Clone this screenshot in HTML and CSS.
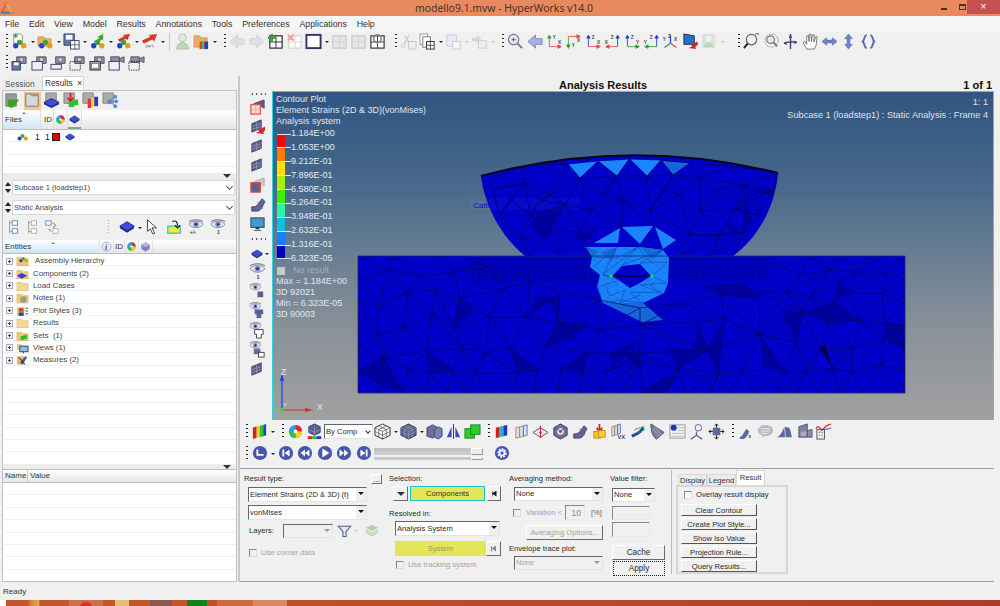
FILE: index.html
```html
<!DOCTYPE html>
<html lang="en">
<head>
<meta charset="utf-8">
<title>modello9.1.mvw - HyperWorks v14.0</title>
<link rel="stylesheet" href="styles.css">
</head>
<body>
<svg class="defs" aria-hidden="true">
  <defs>
    <g id="cl"><circle cx="5" cy="13.5" r="2.8" fill="#2b3fc4"/><circle cx="9" cy="10" r="2.8" fill="#3aa535"/><circle cx="13.5" cy="13.5" r="2.8" fill="#e09a20"/></g>
    <g id="pg"><rect x="8" y="8" width="9" height="9" fill="#fff" stroke="#3c4660"/><path d="M12.5 8v9M8 12.5h9" stroke="#3c4660" stroke-width=".8"/></g>
    <symbol id="clu" viewBox="0 6 18 11"><use href="#cl"/></symbol>
    <symbol id="new" viewBox="0 0 18 18"><path d="M3 1h7l2 2v9H3z" fill="#fff" stroke="#8b8b8b"/><path d="M3 3h4M5 1v4" stroke="#35a030" stroke-width="1.600"/><use href="#cl"/></symbol>
    <symbol id="open" viewBox="0 0 18 18"><path d="M1 4h6l2 2h6v8H1z" fill="#e9ad5f" stroke="#c58a3a" stroke-width=".6"/><use href="#cl"/></symbol>
    <symbol id="save" viewBox="0 0 18 18"><path d="M1 1h11v12H1z" fill="#6476a8" stroke="#3c4660"/><rect x="3" y="2" width="7" height="5" fill="#fff"/><use href="#pg"/></symbol>
    <symbol id="imp" viewBox="0 0 18 18"><path d="M15 1 9 4 11 5.500 5 9l2 1.500L3 12l6 .5-1-2 6-3.500 1 1.500z" fill="#40a828"/><use href="#cl"/></symbol>
    <symbol id="exp" viewBox="0 0 18 18"><path d="M16 1 8 2l2 1.500L3 7l2 2.500 6.500-3.500L13 8z" fill="#d8362a"/><use href="#cl"/></symbol>
    <symbol id="ppt" viewBox="0 0 18 18"><path d="M17 1 8 2l2 2L1 8l2 3 9-4 2 2z" fill="#d8362a"/><text x="5" y="16" class="svt">PPT</text></symbol>
    <symbol id="person" viewBox="0 0 18 18"><circle cx="9" cy="5" r="4" fill="#e3e8dc" stroke="#b7bfae"/><path d="M3 17c0-5 3-7 6-7s6 2 6 7z" fill="#bcd8b4" stroke="#a8c0a0"/></symbol>
    <symbol id="fplot" viewBox="0 0 18 18"><path d="M1 3h6l2 2h6v10H1z" fill="#e9ad5f" stroke="#c58a3a" stroke-width=".6"/><path d="M7 9h2.500v8H7z" fill="#e33"/><path d="M9.500 9H12v8H9.500z" fill="#3c3"/><path d="M12 9h4v8h-4z" fill="#33c"/></symbol>
    <symbol id="al" viewBox="0 0 18 18"><path d="M1 9l8-7v4h7v6H9v4z" fill="#dfe0e3" stroke="#d2d2d6"/></symbol>
    <symbol id="ar" viewBox="0 0 18 18"><path d="M17 9 9 2v4H2v6h7v4z" fill="#dfe0e3" stroke="#d2d2d6"/></symbol>
    <symbol id="addp" viewBox="0 0 18 18"><rect x="3" y="3" width="13" height="13" fill="#fff" stroke="#2c3040" stroke-width="1.300"/><path d="M9.500 3v13M3 9.500h13" stroke="#2c3040"/><path d="M5 1v8M1 5h8" stroke="#38a030" stroke-width="2.600"/></symbol>
    <symbol id="delp" viewBox="0 0 18 18"><rect x="3" y="3" width="13" height="13" fill="#fff" stroke="#d8d8d8" stroke-width="1.300"/><path d="M9.500 3v13M3 9.500h13" stroke="#d8d8d8"/><path d="M2 2l6 6M8 2 2 8" stroke="#eaa8a0" stroke-width="2.400"/></symbol>
    <symbol id="frame" viewBox="0 0 18 18"><rect x="1.500" y="2" width="15" height="14" fill="#fff" stroke="#2d3468" stroke-width="2"/></symbol>
    <symbol id="gp" viewBox="0 0 18 18"><rect x="2" y="3" width="14" height="13" fill="#e6e6e8" stroke="#c7c7ca" stroke-width="1.300"/><path d="M9 3v13M2 9.500h14" stroke="#d2d2d4"/></symbol>
    <symbol id="refr" viewBox="0 0 18 18"><rect x="2" y="3" width="14" height="13" fill="#fff" stroke="#3a3e50" stroke-width="1.300"/><path d="M9 3v13M2 9.500h14" stroke="#3a3e50"/><circle cx="9" cy="6" r="4" fill="none" stroke="#888" stroke-width="1.800"/></symbol>
    <symbol id="cut" viewBox="0 0 18 18"><circle cx="3.500" cy="14" r="2" fill="none" stroke="#cfcfd2"/><path d="M4 12 10 2M11 12 5 3" stroke="#cfcfd2" stroke-width="1.400"/><rect x="9" y="9" width="8" height="8" fill="#eee" stroke="#c8c8ca"/></symbol>
    <symbol id="copy" viewBox="0 0 18 18"><rect x="1" y="1" width="8" height="11" fill="#fff" stroke="#9a9aa0"/><rect x="4" y="4" width="8" height="11" fill="#fff" stroke="#777"/><rect x="8" y="9" width="8" height="8" fill="#fff" stroke="#2c3040"/><path d="M12 9v8M8 13h8" stroke="#2c3040" stroke-width=".8"/></symbol>
    <symbol id="pst" viewBox="0 0 18 18"><rect x="2" y="2" width="10" height="12" fill="#e8ebf2" stroke="#ccd"/><rect x="8" y="9" width="8" height="8" fill="#f6f6f6" stroke="#ccc"/></symbol>
    <symbol id="pst2" viewBox="0 0 18 18"><path d="M1 5h5V2l5 5-5 5V9H1z" fill="#d6d6da"/><rect x="8" y="8" width="8" height="8" fill="#f0f0f0" stroke="#ccc"/></symbol>
    <symbol id="mag" viewBox="0 0 18 18"><circle cx="7" cy="7" r="5.500" fill="#e6e6f6" stroke="#7a7a90" stroke-width="1.300"/><path d="M11 11l5 5" stroke="#7a7a90" stroke-width="2.200"/><path d="M5 7h4M7 5v4" stroke="#555a80"/></symbol>
    <symbol id="back" viewBox="0 0 18 18"><path d="M1 9l8-7v4h7v6H9v4z" fill="#a8aee0" stroke="#8088c8"/></symbol>
    <symbol id="a1" viewBox="0 0 20 18"><path d="M4 15V3M4 1.500 2 5h4z" stroke="#30a030" fill="#30a030"/><path d="M4 15h12M18 15l-4-2v4z" stroke="#e04848" fill="#e04848"/><text x="8" y="6" class="sva">Y</text><text x="14" y="12" class="sva">X</text></symbol>
    <symbol id="a2" viewBox="0 0 20 18"><path d="M4 3v12M4 17 2 13h4z" stroke="#30a030" fill="#30a030"/><path d="M4 3h12M18 3l-4-2v4z" stroke="#e04848" fill="#e04848"/><text x="8" y="16" class="sva">Y</text><text x="14" y="10" class="sva">X</text></symbol>
    <symbol id="a3" viewBox="0 0 20 18"><path d="M4 15V3M4 1.500 2 5h4z" stroke="#2040d0" fill="#2040d0"/><path d="M4 15h12M18 15l-4-2v4z" stroke="#e04848" fill="#e04848"/><text x="8" y="6" class="sva">Z</text><text x="14" y="12" class="sva">X</text></symbol>
    <symbol id="a4" viewBox="0 0 20 18"><path d="M16 15V3M16 1.500 14 5h4z" stroke="#2040d0" fill="#2040d0"/><path d="M16 15H4M2 15l4-2v4z" stroke="#e04848" fill="#e04848"/><text x="8" y="6" class="sva">Z</text><text x="1" y="12" class="sva">X</text></symbol>
    <symbol id="a5" viewBox="0 0 20 18"><path d="M4 15V3M4 1.500 2 5h4z" stroke="#2040d0" fill="#2040d0"/><path d="M4 15h12M18 15l-4-2v4z" stroke="#30a030" fill="#30a030"/><text x="8" y="6" class="sva">Z</text><text x="14" y="12" class="sva">Y</text></symbol>
    <symbol id="a6" viewBox="0 0 20 18"><path d="M16 15V3M16 1.500 14 5h4z" stroke="#2040d0" fill="#2040d0"/><path d="M16 15H4M2 15l4-2v4z" stroke="#30a030" fill="#30a030"/><text x="8" y="6" class="sva">Z</text><text x="1" y="12" class="sva">Y</text></symbol>
    <symbol id="a7" viewBox="0 0 20 18"><path d="M10 11V2" stroke="#2040d0" stroke-width="1.500"/><path d="M10 11 3 16" stroke="#30a030" stroke-width="1.500"/><path d="M10 11l7 5" stroke="#e04848" stroke-width="1.500"/><text x="1" y="8" class="sva">Y</text><text x="7" y="5" class="sva">Z</text><text x="14" y="8" class="sva">X</text></symbol>
    <symbol id="scr" viewBox="0 0 18 18"><path d="M2 1l11 2v9L2 12z" fill="#2a6fc0" stroke="#222a50"/><path d="M16 9l-6 4 1 1-4 2 8 1-1-2 3-3z" fill="#dd2222"/></symbol>
    <symbol id="pers2" viewBox="0 0 18 18"><rect x="1" y="1" width="14" height="15" fill="#d8e4d8"/><circle cx="8" cy="6" r="3" fill="#f2f2f2"/><path d="M3 15c0-4 2-5 5-5s5 1 5 5z" fill="#b8d8b8"/></symbol>
    <symbol id="z1" viewBox="0 0 18 18"><circle cx="9" cy="7" r="5.500" fill="#eef" stroke="#666" stroke-width="1.300"/><path d="M5 11 1 16" stroke="#222" stroke-width="2"/><path d="M13 1h4" stroke="#444"/></symbol>
    <symbol id="z2" viewBox="0 0 18 18"><circle cx="9" cy="8" r="7" fill="none" stroke="#888" stroke-dasharray="1.500 1"/><circle cx="8" cy="7" r="4" fill="#e6e6f6" stroke="#777" stroke-width="1.200"/><path d="M11 10l4 4" stroke="#777" stroke-width="2"/></symbol>
    <symbol id="rot" viewBox="0 0 18 18"><path d="M9 1v16M2 11c3-2 10-2 14-1" fill="none" stroke="#3a4670" stroke-width="1.500"/><path d="M9 1 7 5h4zM2 11l3-2 0 4zM16 10l-3-2v4z" fill="#3a4670"/></symbol>
    <symbol id="hand" viewBox="0 0 18 18"><path d="M5 17 1 10l2-1 2 3V3l2 0 .5 6V1.500h2L10 9l1-7h2l-.5 7.500L14.500 4h1.500L15 13l-2 4z" fill="#fff" stroke="#555" stroke-width=".8"/></symbol>
    <symbol id="lr" viewBox="0 0 18 18"><path d="M1 9l5-4v2.500h6V5l5 4-5 4v-2.500H6V13z" fill="#7480c8" stroke="#4c58a8" stroke-width=".5"/></symbol>
    <symbol id="ud" viewBox="0 0 18 18"><path d="M9 1 5 6h2.500v6H5l4 5 4-5h-2.500V6H13z" fill="#7480c8" stroke="#4c58a8" stroke-width=".5"/></symbol>
    <symbol id="fit" viewBox="0 0 18 18"><path d="M7 2C4 3 5 7 3 9c2 2 1 6 4 7M11 2c3 1 2 5 4 7-2 2-1 6-4 7" fill="none" stroke="#5864b8" stroke-width="2"/></symbol>
    <g id="camb"><path d="M6 3h10v7H6z" fill="#8a8ea8" stroke="#555"/><circle cx="11" cy="6" r="2.400" fill="#c8cce0" stroke="#555" stroke-width=".7"/></g>
    <symbol id="c1" viewBox="0 0 18 18"><use href="#camb"/><rect x="1" y="8" width="9" height="9" fill="#6476a8" stroke="#3c4660"/><rect x="3" y="9" width="5" height="3" fill="#fff"/></symbol>
    <symbol id="c2" viewBox="0 0 18 18"><use href="#camb"/><rect x="1" y="8" width="11" height="9" fill="#eef" stroke="#3c4660"/></symbol>
    <symbol id="c3" viewBox="0 0 18 18"><use href="#camb"/><rect x="1" y="11" width="11" height="5" fill="#eee" stroke="#3c4660"/></symbol>
    <symbol id="c4" viewBox="0 0 18 18"><use href="#camb"/><rect x="1" y="8" width="11" height="9" fill="none" stroke="#333" stroke-dasharray="1.500 1"/></symbol>
    <symbol id="c5" viewBox="0 0 18 18"><use href="#camb"/><rect x="1" y="8" width="11" height="9" fill="#aab" stroke="#333"/><rect x="3" y="10" width="7" height="5" fill="#fff" stroke="#333" stroke-width=".5"/></symbol>
    <symbol id="c6" viewBox="0 0 18 18"><path d="M3 3h9v6H3z" fill="#8a8ea8" stroke="#555"/><path d="M12 5l5-2v6l-5-2z" fill="#8a8ea8" stroke="#555"/><rect x="1" y="8" width="11" height="9" fill="#eef" stroke="#3c4660"/></symbol>
    <symbol id="c7" viewBox="0 0 18 18"><path d="M3 3h9v6H3z" fill="#8a8ea8" stroke="#555"/><path d="M12 5l5-2v6l-5-2z" fill="#8a8ea8" stroke="#555"/><rect x="1" y="8" width="11" height="9" fill="none" stroke="#333" stroke-dasharray="1.500 1"/></symbol>
    <symbol id="f1" viewBox="0 0 18 18"><path d="M2 2h11v13H2z" fill="#9a9aa2" stroke="#777"/><path d="M16 8 4 8l0 7 4 2 3-2z" fill="#3fa028"/></symbol>
    <symbol id="f2" viewBox="0 0 18 18"><path d="M2 2h13v13H2z" fill="#aaa" stroke="#888"/><path d="M2 2h5l1 2h7v11H2z" fill="#d8d8d8" stroke="#888"/></symbol>
    <symbol id="f3" viewBox="0 0 18 18"><path d="M3 1h11v9H3z" fill="#aaa" stroke="#888"/><path d="M9 7 1 11l8 5 8-5z" fill="#3b4fd8" stroke="#1e2c90"/><path d="M1 11v2l8 4 8-4v-2l-8 4z" fill="#1e2c90"/></symbol>
    <symbol id="f4" viewBox="0 0 18 18"><path d="M1 1h11v11H1z" fill="#aaa" stroke="#888"/><path d="M8 1v8M5 6l3 4 3-4" stroke="#e01818" fill="none" stroke-width="1.800"/><rect x="6" y="10" width="6" height="6" fill="#30c030"/><rect x="10" y="8" width="6" height="6" fill="#30c030"/></symbol>
    <symbol id="f5" viewBox="0 0 18 18"><path d="M1 1h11v11H1z" fill="#aaa" stroke="#888"/><path d="M6 7h3.500v10H6z" fill="#e33"/><path d="M9.500 6H13v10H9.500z" fill="#dd3"/><path d="M13 5h4v10h-4z" fill="#33c"/></symbol>
    <symbol id="f6" viewBox="0 0 18 18"><path d="M1 1h11v11H1z" fill="#aaa" stroke="#888"/><circle cx="8" cy="10" r="2.400" fill="#5a88d0"/><circle cx="14" cy="5" r="2" fill="#5a88d0"/><circle cx="15" cy="10" r="2" fill="#5a88d0"/><circle cx="14" cy="15" r="2" fill="#5a88d0"/><path d="M8 10 14 5M8 10h7M8 10l6 5" stroke="#5a88d0"/></symbol>
    <symbol id="cmp" viewBox="0 0 18 18"><path d="M9 3 1 8l8 5 8-5z" fill="#3b4fd8" stroke="#1e2c90"/><path d="M1 8v2.500l8 5 8-5V8l-8 5z" fill="#1e2c90"/></symbol>
    <symbol id="wheel" viewBox="0 0 18 18"><circle cx="9" cy="9" r="7" fill="#2a9df0"/><path d="M9 2a7 7 0 0 1 7 7H9z" fill="#e23"/><path d="M16 9a7 7 0 0 1-7 7V9z" fill="#f2d21c"/><path d="M9 16a7 7 0 0 1-7-7h7z" fill="#2fbf3a"/><path d="M9 7a2 2 0 1 0 .01 0z" fill="#fff"/></symbol>
    <symbol id="cube" viewBox="0 0 18 18"><path d="M9 2 2 6v7l7 4 7-4V6z" fill="#8288c8"/><path d="M9 2 2 6l7 4 7-4z" fill="#b0b6e0"/><path d="M9 10v7" stroke="#6a70b0"/></symbol>
    <symbol id="info" viewBox="0 0 18 18"><circle cx="9" cy="9" r="7.500" fill="#e8ecf6" stroke="#8a94c0"/><text x="6.500" y="14" class="svi">i</text></symbol>
    <symbol id="sp1" viewBox="0 0 18 18"><path d="M4 2v14M4 4h3M4 14h3" stroke="#999" fill="none"/><rect x="7" y="2" width="6" height="5" fill="#fff" stroke="#5a88d0"/><rect x="7" y="11" width="6" height="5" fill="#fff" stroke="#5a88d0"/></symbol>
    <symbol id="sp2" viewBox="0 0 18 18"><path d="M4 2v14M4 4h3M4 14h3" stroke="#999" fill="none"/><rect x="7" y="2" width="6" height="5" fill="#fff" stroke="#aaa"/><rect x="7" y="11" width="6" height="5" fill="#fff" stroke="#aaa"/></symbol>
    <symbol id="sp3" viewBox="0 0 18 18"><rect x="2" y="2" width="6" height="5" fill="#fff" stroke="#5a88d0"/><rect x="10" y="11" width="6" height="5" fill="#fff" stroke="#aaa"/><path d="M10 4l3 3-3 3M8 14l-3-3" fill="none" stroke="#555"/></symbol>
    <symbol id="curs" viewBox="0 0 18 18"><path d="M4 1v13l3-3 3 6 2-1-3-6h5z" fill="#fff" stroke="#333"/></symbol>
    <symbol id="yel" viewBox="0 0 18 18"><rect x="2" y="8" width="14" height="8" fill="#f2ea30" stroke="#20c8d8" stroke-width="1.400"/><path d="M7 3c4-2 6 0 6 5M10 7l3 3 3-3" fill="none" stroke="#222" stroke-width="1.300"/></symbol>
    <g id="eyeb"><path d="M1 6c4-5 12-5 16 0-4 5-12 5-16 0z" fill="#e4e8f4" stroke="#6a6f80" stroke-width=".8"/><circle cx="9" cy="6" r="3.100" fill="#7090d8"/><circle cx="9" cy="6" r="1.300" fill="#223"/><path d="M1 3c4-3 12-3 16 0" fill="none" stroke="#777" stroke-width="1.200"/></g>
    <symbol id="eye1" viewBox="0 0 18 18"><use href="#eyeb"/><text x="8" y="16.500" class="svb">1</text></symbol>
    <symbol id="eyepm" viewBox="0 0 18 18"><use href="#eyeb"/><text x="2" y="16.500" class="svb">+/-</text></symbol>
    <symbol id="eyec" viewBox="0 0 18 18"><g transform="scale(.75)"><use href="#eyeb"/></g><path d="M9 9h6v6H9z" fill="#5a5f90"/></symbol>
    <symbol id="eyet" viewBox="0 0 18 18"><g transform="scale(.75)"><use href="#eyeb"/></g><path d="M6 8h9v5h-2v4H8v-4H6z" fill="#5a5f90"/></symbol>
    <symbol id="eyeu" viewBox="0 0 18 18"><g transform="scale(.75)"><use href="#eyeb"/></g><path d="M6 8h9v5h-2v4H8v-4H6z" fill="#fff" stroke="#444"/></symbol>
    <symbol id="eyed" viewBox="0 0 18 18"><g transform="scale(.75)"><use href="#eyeb"/></g><rect x="5" y="8" width="7" height="6" fill="#6a6f90"/><rect x="10" y="12" width="6" height="5" fill="#fff" stroke="#444"/></symbol>
    <g id="mesh3"><path d="M3 6l10-4v9L3 15z" fill="#5a6088" stroke="#444c70"/><path d="M8 4v9M3 9l10-3M3 12l10-3" stroke="#aab" stroke-width=".6"/></g>
    <symbol id="v1" viewBox="0 0 18 18"><path d="M5 5l11-4v9" fill="#5a6088" stroke="#444c70"/><rect x="2" y="6" width="10" height="10" fill="#f6dcd6" stroke="#e0503a" stroke-width="1.300"/><path d="M7 6v10M2 11h10" stroke="#e0a090" stroke-width=".7"/></symbol>
    <symbol id="v2" viewBox="0 0 18 18"><use href="#mesh3"/><path d="M17 9l-7 4 1 1-4 2 9 1-1-2 2-2z" fill="#dd2222"/></symbol>
    <symbol id="v3" viewBox="0 0 18 18"><use href="#mesh3"/></symbol>
    <symbol id="v5" viewBox="0 0 18 18"><path d="M5 5l11-4v9" fill="#c8c8d4" stroke="#aab"/><rect x="2" y="6" width="10" height="10" fill="#5a6088" stroke="#e0503a" stroke-width="1.300"/></symbol>
    <symbol id="v6" viewBox="0 0 18 18"><path d="M7 11c3-1 4-5 7-8l3 3c-3 4-3 9-8 10H3v-4z" fill="#5a6aa0" stroke="#3a4670"/><path d="M2 12l5-1M9 6l6 8" stroke="#dd2222" stroke-dasharray="1.500 1"/></symbol>
    <symbol id="v7" viewBox="0 0 18 18"><rect x="2" y="2" width="14" height="10" fill="#3f9bd8" stroke="#333a50"/><path d="M7 12h4v2H7zM5 15h8v1H5z" fill="#333a50"/></symbol>
    <symbol id="plot" viewBox="0 0 18 18"><path d="M2 5l4-1.500v12L2 17z" fill="#c22"/><path d="M6 3.500 9.500 3v12L6 15.500z" fill="#e8d020"/><path d="M9.500 3 13 2v12l-3.500 1z" fill="#2fbf3a"/><path d="M13 2l3-1v12l-3 1z" fill="#24a"/></symbol>
    <symbol id="stack" viewBox="0 0 18 18"><path d="M9 1 3 4v6l6 3 6-3V4z" fill="#5a6090" stroke="#3a4070"/><path d="M3 7l6 3 6-3M9 4v9" stroke="#aab" fill="none" stroke-width=".6"/><rect x="2" y="14" width="4.700" height="3" fill="#e22"/><rect x="6.700" y="14" width="4.700" height="3" fill="#2b3"/><rect x="11.400" y="14" width="4.700" height="3" fill="#23c"/></symbol>
    <symbol id="wire" viewBox="0 0 18 18"><path d="M9 1 1 5v8l8 4 8-4V5z" fill="#f4f4f8" stroke="#333"/><path d="M1 5l8 4 8-4M9 9v8M5 3l8 4v8M13 3 5 7v8M1 9l8 4 8-4" fill="none" stroke="#333" stroke-width=".6"/></symbol>
    <symbol id="sol" viewBox="0 0 18 18"><path d="M9 1 1 5v8l8 4 8-4V5z" fill="#5d6590" stroke="#333a60"/><path d="M1 5l8 4 8-4M9 9v8M5 3l8 4v8M13 3 5 7v8M1 9l8 4 8-4" fill="none" stroke="#aab" stroke-width=".5"/></symbol>
    <symbol id="blk" viewBox="0 0 18 18"><path d="M1 5l6-3 4 2v9l-4 3-6-2z" fill="#6a70a0" stroke="#444a78"/><path d="M9 7l4-3 4 2v8l-4 3-4-2z" fill="#7a80b0" stroke="#444a78"/></symbol>
    <symbol id="mirr" viewBox="0 0 18 18"><path d="M7 4v11L2 15z" fill="#3a4cc0"/><path d="M11 4v11l5 0z" fill="#3a4cc0"/><path d="M9 1v16" stroke="#333"/></symbol>
    <symbol id="grn" viewBox="0 0 18 18"><rect x="1" y="6" width="10" height="10" fill="#2ecc2e" stroke="#1a8a1a"/><rect x="7" y="2" width="10" height="10" fill="#2ecc2e" stroke="#1a8a1a"/></symbol>
    <symbol id="b1" viewBox="0 0 18 18"><path d="M3 5l4-1v11l-4 1z" fill="#c22"/><path d="M7 4l4-1v11l-4 1z" fill="#2bb"/><path d="M11 3l4-1v11l-4 1z" fill="#23c"/></symbol>
    <symbol id="b2" viewBox="0 0 18 18"><path d="M3 5l4-1v11l-4 1z" fill="#dde" stroke="#c44" stroke-width=".7"/><path d="M7 4l4-1v11l-4 1z" fill="#dde" stroke="#3a3" stroke-width=".7"/><path d="M11 3l4-1v11l-4 1z" fill="#dde" stroke="#34c" stroke-width=".7"/></symbol>
    <symbol id="b3" viewBox="0 0 18 18"><path d="M1 10l8-5 8 5-8 5z" fill="#eef" stroke="#556"/><path d="M9 3v6M9 10v6" stroke="#d22" stroke-width="1.200"/><circle cx="9" cy="10" r="1.300" fill="#d22"/></symbol>
    <symbol id="b4" viewBox="0 0 18 18"><path d="M9 1 2 5v8l7 4 7-4V5z" fill="#6d7398" stroke="#333a60"/><circle cx="9" cy="9" r="3.500" fill="#e0e4f0"/><circle cx="9" cy="9" r="1.500" fill="#d22"/><path d="M3 5l5 3M15 5l-5 3" stroke="#2c5ad0"/></symbol>
    <symbol id="b6" viewBox="0 0 18 18"><path d="M9 1v7M6 5l3 4 3-4" stroke="#e01818" fill="none" stroke-width="1.800"/><rect x="3" y="9" width="7" height="7" fill="#f8c020" stroke="#c69010"/><rect x="8" y="8" width="7" height="7" fill="#f8d040" stroke="#c69010"/></symbol>
    <symbol id="b7" viewBox="0 0 18 18"><path d="M2 4l3-1v10l-3 1z" fill="#dde" stroke="#c44" stroke-width=".7"/><path d="M5 3l3-1v10l-3 1z" fill="#dde" stroke="#3a3" stroke-width=".7"/><path d="M8 2l3-1v10l-3 1z" fill="#dde" stroke="#34c" stroke-width=".7"/><text x="8" y="17" class="svb">VX</text></symbol>
    <symbol id="b8" viewBox="0 0 18 18"><path d="M2 14c3-2 8-2 12-9" fill="none" stroke="#2a3ca8" stroke-width="3"/><path d="M4 8l11-5M3 12l13-5" stroke="#2fbf3a" stroke-dasharray="2 1"/><path d="M6 6l10-2" stroke="#e22" stroke-dasharray="1 1"/></symbol>
    <symbol id="b9" viewBox="0 0 18 18"><path d="M2 1l14 9-8 7C3 14 2 7 2 1z" fill="#7a8098" stroke="#444c70"/><path d="M4 6l8 9M6 3l7 10" stroke="#bbc" stroke-width=".6"/></symbol>
    <symbol id="b10" viewBox="0 0 18 18"><rect x="1" y="2" width="16" height="14" fill="#f2f2f2" stroke="#999"/><circle cx="5" cy="5" r="3.200" fill="#2034b0"/><path d="M9 5h7M9 8h7M3 11h13M3 14h13" stroke="#bbb"/></symbol>
    <symbol id="b11" viewBox="0 0 18 18"><path d="M9 9v4M9 13 3 17M9 13l6 4" stroke="#5a6aa0" stroke-width="1.500"/><circle cx="11" cy="5" r="3.500" fill="#eef" stroke="#5a6aa0"/></symbol>
    <symbol id="b12" viewBox="0 0 18 18"><rect x="5" y="5" width="8" height="8" fill="#5a6aa0"/><path d="M1 9h4M13 9h4M9 1v4M9 13v4M3 7l-2 2 2 2M15 7l2 2-2 2M7 3l2-2 2 2M7 15l2 2 2-2" stroke="#111" fill="none"/></symbol>
    <symbol id="b13" viewBox="0 0 18 18"><path d="M3 15c3-1 4-5 7-9l3 3c-2 4-3 7-6 8H3z" fill="#5a6aa0"/><text x="12" y="16" class="sva">x</text></symbol>
    <symbol id="b14" viewBox="0 0 18 18"><ellipse cx="9" cy="8" rx="8" ry="6" fill="#b8bac4"/><path d="M5 16l2-4h3z" fill="#b8bac4"/><path d="M4 6h10M4 8.500h10M4 11h7" stroke="#fff" stroke-width=".7"/></symbol>
    <symbol id="b15" viewBox="0 0 18 18"><path d="M1 15c3-1 5-4 8-11l5 1c2 3 2 8 3 10z" fill="#5a6aa0"/><path d="M9 4l1 11" stroke="#c8cce0"/></symbol>
    <symbol id="b16" viewBox="0 0 18 18"><path d="M3 4l9-3v14H3z" fill="#7a80a0" stroke="#555a78"/><path d="M12 8l5-1v8h-5z" fill="#8a8eb0" stroke="#555a78"/><rect x="5" y="9" width="6" height="5" fill="#aab"/></symbol>
    <symbol id="b17" viewBox="0 0 18 18"><rect x="2" y="7" width="8" height="10" fill="#eee" stroke="#555"/><path d="M4 10h1M7 10h1M4 13h1M7 13h1" stroke="#333"/><path d="M1 6c3-6 5 4 8 0s5-4 8-5" fill="none" stroke="#e02020" stroke-width="1.200"/><path d="M6 9c3-4 6-1 11-4" fill="none" stroke="#2c3cd0"/></symbol>
    <symbol id="fun" viewBox="0 0 18 18"><path d="M1 3h16l-6 7v6H7v-6z" fill="#dfe6f2" stroke="#4a5a80" stroke-width="1.300"/></symbol>
    <symbol id="lay" viewBox="0 0 18 18"><path d="M9 1 1 5l8 4 8-4z" fill="#b8d0a8"/><path d="M1 8l8 4 8-4M1 11l8 4 8-4" fill="none" stroke="#b4ccb0" stroke-width="1.600"/></symbol>
    <symbol id="mp" viewBox="0 0 18 18"><circle cx="9" cy="9" r="8" fill="#4657ad"/></symbol>
    <symbol id="tl" viewBox="0 0 18 18"><use href="#mp"/><path d="M7 5v5h6v2H5V5z" fill="#fff"/></symbol>
    <symbol id="first" viewBox="0 0 18 18"><use href="#mp"/><path d="M5 5h2v8H5zM13 5v8L7.500 9z" fill="#fff"/></symbol>
    <symbol id="rw" viewBox="0 0 18 18"><use href="#mp"/><path d="M9 5v8L4 9zM14 5v8L9 9z" fill="#fff"/></symbol>
    <symbol id="play" viewBox="0 0 18 18"><use href="#mp"/><path d="M6 4v10l8-5z" fill="#fff"/></symbol>
    <symbol id="ff" viewBox="0 0 18 18"><use href="#mp"/><path d="M4 5v8l5-4zM9 5v8l5-4z" fill="#fff"/></symbol>
    <symbol id="last" viewBox="0 0 18 18"><use href="#mp"/><path d="M5 5v8l5.500-4zM11 5h2v8h-2z" fill="#fff"/></symbol>
    <symbol id="gear" viewBox="0 0 18 18"><use href="#mp"/><circle cx="9" cy="9" r="4" fill="none" stroke="#fff" stroke-width="2.500" stroke-dasharray="2 1"/><circle cx="9" cy="9" r="2.600" fill="none" stroke="#fff" stroke-width="1.500"/></symbol>
    <symbol id="t1" viewBox="0 0 14 12"><path d="M1 2h5l1 1.500h6V11H1z" fill="#f2c878" stroke="#d8a850" stroke-width=".6"/><use href="#cl" transform="translate(2 -3) scale(.65)"/></symbol>
    <symbol id="t2" viewBox="0 0 14 12"><path d="M1 2h5l1 1.500h6V11H1z" fill="#f2c878" stroke="#d8a850" stroke-width=".6"/><path d="M6 5 1 8l5 3 6-3z" fill="#2b3fd0"/></symbol>
    <symbol id="t3" viewBox="0 0 14 12"><path d="M1 2h5l1 1.500h6V11H1z" fill="#f2d898" stroke="#d8b060" stroke-width=".6"/></symbol>
    <symbol id="t4" viewBox="0 0 14 12"><path d="M1 2h5l1 1.500h6V11H1z" fill="#f2c878" stroke="#d8a850" stroke-width=".6"/><circle cx="8" cy="7.500" r="3.500" fill="#999"/></symbol>
    <symbol id="t5" viewBox="0 0 14 12"><path d="M1 2h8v9H1z" fill="#f2c878"/><path d="M3 3h5v8H3z" fill="#e33"/><path d="M3 6h5v2H3z" fill="#3c3"/><path d="M3 8h5v3H3z" fill="#33c"/><path d="M10 3h3M10 6h3M10 9h3" stroke="#444"/></symbol>
    <symbol id="t6" viewBox="0 0 14 12"><path d="M1 2h5l1 1.500h6V11H1z" fill="#f2c878" stroke="#d8a850" stroke-width=".6"/><rect x="5" y="6" width="4" height="4" fill="#26c026"/><rect x="8" y="5" width="4" height="4" fill="#26c026"/></symbol>
    <symbol id="t7" viewBox="0 0 14 12"><path d="M1 2h5l1 1.500h6V8H1z" fill="#f2c878"/><rect x="4" y="4" width="9" height="6" fill="#8ac0e0" stroke="#445"/><path d="M8 10v2" stroke="#445"/></symbol>
    <symbol id="t8" viewBox="0 0 14 12"><path d="M1 2h8v9H1z" fill="#e8b860"/><path d="M4 9l6-7 2 1-5 8z" fill="#4a5a90"/><path d="M3 3l7 8" stroke="#222"/></symbol>
    <symbol id="logo" viewBox="0 0 16 16"><path d="M8 2 2 13h12z" fill="none" stroke="#e5572d" stroke-width="2"/><path d="M2 13h12" stroke="#3a7fc8" stroke-width="2"/><path d="M8 2l6 11" stroke="#f2b441" stroke-width="2"/></symbol>
  </defs>
</svg>

<header class="titlebar">
  <svg class="logo"><use href="#logo"/></svg>
  <span class="title">modello9.1.mvw - HyperWorks v14.0</span>
  <div class="winbtns">
    <span class="wb"><i class="min"></i></span>
    <span class="wb"><i class="max"></i></span>
    <span class="wb close">×</span>
  </div>
</header>

<nav class="menubar">
  <span>File</span><span>Edit</span><span>View</span><span>Model</span><span>Results</span><span>Annotations</span><span>Tools</span><span>Preferences</span><span>Applications</span><span>Help</span>
</nav>

<section class="toolbars">
  <div class="tb">
    <i class="g"></i>
    <span class="i"><svg><use href="#new"/></svg></span><i class="car"></i>
    <span class="i"><svg><use href="#open"/></svg></span><i class="car"></i>
    <span class="i"><svg><use href="#save"/></svg></span><i class="car"></i>
    <span class="i"><svg><use href="#imp"/></svg></span><i class="car"></i>
    <span class="i"><svg><use href="#exp"/></svg></span><i class="car"></i>
    <span class="i"><svg><use href="#ppt"/></svg></span><i class="car"></i>
    <i class="vs"></i>
    <span class="i"><svg><use href="#person"/></svg></span>
    <span class="i"><svg><use href="#fplot"/></svg></span><i class="car"></i>
    <i class="g"></i>
    <span class="i"><svg><use href="#al"/></svg></span>
    <span class="i"><svg><use href="#ar"/></svg></span>
    <span class="i"><svg><use href="#addp"/></svg></span>
    <span class="i"><svg><use href="#delp"/></svg></span>
    <span class="i"><svg><use href="#frame"/></svg></span><i class="car"></i>
    <span class="i"><svg><use href="#gp"/></svg></span>
    <span class="i"><svg><use href="#gp"/></svg></span>
    <span class="i"><svg><use href="#refr"/></svg></span>
    <i class="g g2"></i>
    <span class="i"><svg><use href="#cut"/></svg></span>
    <span class="i"><svg><use href="#copy"/></svg></span><i class="car"></i>
    <span class="i"><svg><use href="#pst"/></svg></span><i class="car pale"></i>
    <span class="i"><svg><use href="#pst2"/></svg></span><i class="car pale"></i>
    <i class="g"></i>
    <span class="i w"><svg><use href="#mag"/></svg></span>
    <span class="i w"><svg><use href="#back"/></svg></span>
    <span class="i w"><svg><use href="#a1"/></svg></span>
    <span class="i w"><svg><use href="#a2"/></svg></span>
    <span class="i w"><svg><use href="#a3"/></svg></span>
    <span class="i w"><svg><use href="#a4"/></svg></span>
    <span class="i w"><svg><use href="#a5"/></svg></span>
    <span class="i w"><svg><use href="#a6"/></svg></span>
    <span class="i w"><svg><use href="#a7"/></svg></span>
    <span class="i w"><svg><use href="#scr"/></svg></span>
    <span class="i w"><svg><use href="#pers2"/></svg></span><i class="car pale"></i>
    <i class="g g3"></i>
    <span class="i w"><svg><use href="#z1"/></svg></span>
    <span class="i w"><svg><use href="#z2"/></svg></span>
    <span class="i w"><svg><use href="#rot"/></svg></span>
    <span class="i w"><svg><use href="#hand"/></svg></span>
    <span class="i w"><svg><use href="#lr"/></svg></span>
    <span class="i w"><svg><use href="#ud"/></svg></span>
    <span class="i w"><svg><use href="#fit"/></svg></span>
  </div>
  <div class="tb tb2">
    <i class="g"></i>
    <span class="i w"><svg><use href="#c1"/></svg></span>
    <span class="i w"><svg><use href="#c2"/></svg></span>
    <span class="i w"><svg><use href="#c3"/></svg></span>
    <span class="i w"><svg><use href="#c4"/></svg></span>
    <span class="i w"><svg><use href="#c5"/></svg></span>
    <span class="i w"><svg><use href="#c6"/></svg></span>
    <span class="i w"><svg><use href="#c7"/></svg></span>
  </div>
</section>

<main class="main">
  <aside class="left">
    <div class="tabs">
      <span class="tab">Session</span>
      <span class="tab on">Results <b class="x">×</b></span>
    </div>
    <div class="lbox">
      <div class="ftools">
        <span class="fi"><svg><use href="#f1"/></svg></span>
        <span class="fi hl"><svg><use href="#f2"/></svg></span>
        <span class="fi"><svg><use href="#f3"/></svg></span>
        <span class="fi"><svg><use href="#f4"/></svg></span>
        <span class="fi"><svg><use href="#f5"/></svg></span>
        <span class="fi"><svg><use href="#f6"/></svg></span>
      </div>
      <div class="hdr hfiles">
        <span class="hc hsort hs1">Files</span>
        <span class="hc hid">ID</span>
        <span class="hc hico"><svg><use href="#wheel"/></svg></span>
        <span class="hc hico hbar"><svg><use href="#cmp"/></svg></span>
      </div>
      <div class="list flist">
        <div class="frow">
          <svg class="fc"><use href="#clu"/></svg>
          <b class="n1">1</b><b class="n2">1</b><i class="red"></i>
          <svg class="fb"><use href="#cmp"/></svg>
        </div>
      </div>
      <div class="split"><i class="tri"></i></div>
      <div class="selrow">
        <span class="spin"><i class="up"></i><i class="dn"></i></span>
        <div class="combo">Subcase 1 (loadstep1)</div>
      </div>
      <div class="selrow low">
        <span class="spin"><i class="up"></i><i class="dn"></i></span>
        <div class="combo">Static Analysis</div>
      </div>
      <div class="etools">
        <span class="ei"><svg><use href="#sp1"/></svg></span>
        <span class="ei"><svg><use href="#sp2"/></svg></span>
        <span class="ei"><svg><use href="#sp3"/></svg></span>
        <i class="dots"></i>
        <span class="ei"><svg><use href="#cmp"/></svg></span><i class="car small"></i>
        <span class="ei"><svg><use href="#curs"/></svg></span>
        <span class="ei e3"><svg><use href="#yel"/></svg></span>
        <span class="ei e4"><svg><use href="#eyepm"/></svg></span>
        <span class="ei e4"><svg><use href="#eye1"/></svg></span>
      </div>
      <div class="hdr hent">
        <span class="hc hsort hs2">Entities</span>
        <span class="hc hico"><svg><use href="#info"/></svg></span>
        <span class="hc hid">ID</span>
        <span class="hc hico"><svg><use href="#wheel"/></svg></span>
        <span class="hc hico"><svg><use href="#cube"/></svg></span>
      </div>
      <div class="list tree">
        <div class="node"><i class="exp"></i><svg><use href="#t1"/></svg><span class="first">Assembly Hierarchy</span></div>
        <div class="node"><i class="exp"></i><svg><use href="#t2"/></svg><span>Components (2)</span></div>
        <div class="node"><i class="exp"></i><svg><use href="#t3"/></svg><span>Load Cases</span></div>
        <div class="node"><i class="exp"></i><svg><use href="#t4"/></svg><span>Notes (1)</span></div>
        <div class="node"><i class="exp"></i><svg><use href="#t5"/></svg><span>Plot Styles (3)</span></div>
        <div class="node"><i class="exp"></i><svg><use href="#t3"/></svg><span>Results</span></div>
        <div class="node"><i class="exp"></i><svg><use href="#t6"/></svg><span>Sets&nbsp; (1)</span></div>
        <div class="node"><i class="exp"></i><svg><use href="#t7"/></svg><span>Views (1)</span></div>
        <div class="node"><i class="exp"></i><svg><use href="#t8"/></svg><span>Measures (2)</span></div>
      </div>
      <div class="split thin"><i class="tri"></i></div>
      <div class="hdr hname">
        <span class="hc hn">Name</span>
        <span class="hc">Value</span>
      </div>
      <div class="list plist"></div>
    </div>
  </aside>

  <section class="right">
    <div class="ptitle"><span>Analysis Results</span><span>1 of 1</span></div>
    <div class="vrow">
      <div class="vtool">
        <i class="hd"></i>
        <span class="vi"><svg><use href="#v1"/></svg></span>
        <span class="vi"><svg><use href="#v2"/></svg></span>
        <span class="vi"><svg><use href="#v3"/></svg></span>
        <span class="vi"><svg><use href="#v3"/></svg></span>
        <span class="vi"><svg><use href="#v5"/></svg></span>
        <span class="vi"><svg><use href="#v6"/></svg></span>
        <span class="vi"><svg><use href="#v7"/></svg></span>
        <i class="hd hd2"></i>
        <span class="vi vc"><svg><use href="#cmp"/></svg><i class="car small"></i></span>
        <span class="vi ve"><svg><use href="#eye1"/></svg></span>
        <span class="vi"><svg><use href="#eyec"/></svg></span>
        <span class="vi"><svg><use href="#eyet"/></svg></span>
        <span class="vi"><svg><use href="#eyeu"/></svg></span>
        <span class="vi"><svg><use href="#eyed"/></svg></span>
        <span class="vi"><svg><use href="#v3"/></svg></span>
      </div>
      <div class="vp">
        <svg class="model" viewBox="273 92 720 327" preserveAspectRatio="none">
          <defs>
            <clipPath id="dome"><path d="M481 176Q630 136 778 173C775 210 755 240 733 256H525C505 240 485 210 481 176Z"/></clipPath>
            <clipPath id="block"><rect x="358" y="256" width="547" height="137"/></clipPath>
            <pattern id="fine" width="7" height="5" patternUnits="userSpaceOnUse"><path d="M0 0 3.500 2 7 0M3.500 2V5M0 5l3.500-3M7 5 3.500 2" fill="none" stroke="#00006c" stroke-width=".5"/></pattern>
            <pattern id="fine2" width="9" height="7" patternUnits="userSpaceOnUse"><path d="M0 0 4.500 3 9 0M4.500 3V7M0 7l4.500-4M9 7 4.500 3" fill="none" stroke="#1470e0" stroke-width=".5"/></pattern>
          </defs>
          <path class="base" d="M481 176Q630 136 778 173C775 210 755 240 733 256H525C505 240 485 210 481 176Z"/>
          <rect class="base" x="358" y="256" width="547" height="137"/>
          <g class="dk">
            <path d="M358 371 383 357 403 393 380 385z"/><path d="M427 351 455 370 430 373z"/>
            <path d="M537 297 557 297 527 317z"/><path d="M548 297 560 297 558 322z"/>
            <path d="M545 347 558 322 590 323 570 340z"/><path d="M510 348 537 370 518 373z"/>
            <path d="M563 368 587 353 583 373z"/><path d="M610 353 640 340 610 370z"/>
            <path d="M698 323 708 350 693 353z"/><path d="M678 369 708 350 667 348z"/>
            <path d="M725 319 708 350 719 373z"/><path d="M760 335 785 372 763 367z"/>
            <path d="M840 278 848 293 833 302z"/><path d="M803 312 828 323 860 321 833 302z"/>
            <path d="M780 310 803 312 796 342z"/><path d="M885 323 905 325 905 349 885 339z"/>
            <path d="M717 207 730 233 743 230 725 222z"/><path d="M745 192 752 222 742 230z"/>
            <path d="M743 190 775 189 772 195z"/><path d="M540 212 565 205 545 240 530 225z"/>
            <path d="M570 240 600 225 590 238z"/><path d="M700 286 745 283 760 300 720 295z"/>
            <path d="M640 393 660 380 680 375 665 393z"/><path d="M620 352 640 353 640 370z"/>
            <path d="M460 299 475 310 453 327z"/>
          </g>
          <path class="blk" d="M820 348 825 345 832 367z"/>
          <rect x="470" y="258" width="130" height="24" fill="url(#fine)"/>
          <rect x="665" y="258" width="105" height="23" fill="url(#fine)"/>
          <g class="lt">
            <path d="M568 164 598 161 580 178z"/><path d="M598 161 629 159 617 176z"/><path d="M630 159 661 160 647 176z"/>
            <path class="md" d="M662 161 690 163 673 175z"/>
            <path d="M622 227 653 226 640 244z"/><path d="M620 228 618 243 594 243z"/><path d="M655 227 676 240 663 249z"/>
            <path d="M592 257 585 247 617 247 638 247 663 250 669 258 668 283 664 293 643 303 603 303 597 287 600 275 590 267z"/>
            <path class="md" d="M603 303 643 303 663 320 642 322z"/>
            <path class="md" d="M585 247 600 251 592 257z"/><path class="md" d="M640 247 663 250 652 259z"/><path class="md" d="M600 252 617 247 612 262z"/>
          </g>
          <path fill="url(#fine2)" d="M592 257 585 247 617 247 638 247 663 250 669 258 668 283 664 293 643 303 603 303 597 287 600 275 590 267z"/>
          <path class="base" d="M612 276 622 266 640 264 651 276 640 283 630 288 620 281z"/>
          <rect x="470" y="198" width="110" height="12" class="ghostbox"/>
          <text x="473" y="208" class="ghost">Cattura Spessa</text>
          <g class="edges" clip-path="url(#dome)">
            <path d="M481 176 492 190 525 183 520 165 550 195 568 164 580 178 598 161 617 176 629 159 647 176 661 160 673 175 690 163 700 178 730 166 745 185 778 173 772 190"/>
            <path d="M492 190 500 215 525 183 530 215 550 195 565 205 580 178 590 210 617 176 622 200 647 176 650 210 673 175 680 195 700 178 700 210 745 185 735 210 772 190 760 215"/>
            <path d="M500 215 530 215 565 205 590 210 622 200 650 210 680 195 700 210 735 210 760 215"/>
            <path d="M500 215 520 240 530 215 550 230 565 205 580 232 590 210 622 227 622 200 653 226 650 210 690 235 680 195 M700 210 690 235 720 235 700 210 M735 210 720 235 745 232 760 215 735 210"/>
            <path d="M520 240 550 230 580 232 594 243 M690 235 720 235 745 232 M520 240 530 256 550 230 560 256 580 232 590 256 M690 235 680 256 720 235 710 256 745 232 733 256"/>
            <path d="M481 176 520 165 568 164 598 161 629 159 661 160 690 163 730 166 778 173 M492 190 525 183 550 195 580 178 617 176 647 176 673 175 700 178 745 185 772 190"/>
            <path d="M525 183 540 200 550 195M540 200 530 215M540 200 565 205M590 210 605 195 622 200M605 195 580 178M605 195 617 176M650 210 665 190 680 195M665 190 647 176M665 190 673 175M700 210 715 190 735 210M715 190 700 178M715 190 745 185M735 210 750 195 760 215M750 195 745 185M750 195 772 190M510 200 525 183M510 200 500 215M510 200 530 215M490 180 505 172 520 165"/>
          </g>
          <g class="edges" clip-path="url(#block)">
            <path d="M358 280 388 270 420 276 455 272 490 268"/>
            <path d="M358 256 388 270 395 256 420 276 440 256 455 272 475 262 490 268"/>
            <path d="M358 300 378 305 407 293 435 290 460 299 505 288 530 282 560 292 600 300 640 308 683 303 720 295 760 292 787 292 810 297 833 302 848 293 882 293 905 304"/>
            <path d="M358 280 378 305 388 270 407 293 420 276 435 290 455 272 460 299 490 268 505 288 520 272 530 282"/>
            <path d="M358 325 378 335 405 328 432 314 453 327 490 317 527 317 558 322 600 330 640 325 697 322 725 319 759 335 803 312 828 323 860 321 885 323 905 325"/>
            <path d="M378 305 378 335M358 300 378 335M378 305 405 328 407 293 432 314 435 290 453 327 460 299 432 314M460 299 490 317 505 288 527 317 530 282M527 317 560 292 558 322 600 300 600 330 640 308 640 325 683 303 697 322M683 303 725 319 720 295 759 335 760 292 803 312 787 292 759 335M787 292 803 312 810 297 828 323 833 302 860 321 848 293M860 321 882 293 885 323 905 304"/>
            <path d="M358 347 383 357 427 351 462 348 485 353 510 348 545 347 588 353 640 353 708 350 759 335 796 342 821 349 853 348 885 339 905 349"/>
            <path d="M358 325 358 347M378 335 358 347M378 335 383 357 405 328 427 351 432 314 462 348 453 327 485 353 490 317 510 348 527 317 545 347 558 322 588 353 600 330 640 353 640 325 708 350 697 322M725 319 708 350M759 335 796 342 803 312 821 349 828 323 853 348 860 321 885 339 885 323 905 349"/>
            <path d="M358 371 383 357 408 369 430 373 452 372 475 373 518 373 537 370 562 369 583 373 608 371 640 360 678 369 719 373 743 371 785 372 807 372 833 368 852 372 880 365 905 370"/>
            <path d="M358 347 358 371M383 357 408 369 427 351 430 373M427 351 452 372 462 348 475 373 485 353 518 373 510 348 537 370 545 347 562 369 588 353 583 373M588 353 608 371 640 353 640 360M640 353 678 369 708 350 719 373M708 350 743 371 759 335 785 372 796 342 807 372 821 349 833 368 853 348 852 372 885 339 880 365 905 349 905 370"/>
            <path d="M358 371 380 393 383 357 403 393 408 369 425 393 430 373 447 393 452 372 468 393 475 373 490 393 518 373 513 393 537 370 533 393 562 369 557 393 583 373 578 393 608 371 600 393 640 360 622 393 640 360 643 393 678 369 665 393 678 369 687 393 719 373 710 393 719 373 730 393 743 371 753 393 785 372 775 393 807 372 795 393 807 372 818 393 833 368 840 393 852 372 862 393 880 365 905 393 905 370"/>
            <path d="M770 262 800 275 810 256 830 270 840 256 857 272 873 256 888 272 905 256M800 275 830 270 857 272 888 272 905 280M800 275 787 292 830 270 810 297 857 272 848 293 888 272 882 293 905 280 905 304"/>
          </g>
          <g class="edges lt-e">
            <path d="M593 267 617 247 603 275 638 247 622 265 663 250 640 263 667 262 652 276 667 283 640 285 662 293 630 292 643 303 620 300 603 303 598 287 620 280 603 275 610 276"/>
            <path d="M592 257 617 258 638 247 650 262 663 250M605 285 610 296 625 290 620 303 640 295M650 285 660 292"/>
          </g>
          <path class="top" d="M481 176Q630 136 778 173"/>
          <path class="crack" d="M612 276H652"/>
          <circle class="hot" cx="611" cy="276" r="1.800"/><circle class="hot" cx="652" cy="276" r="1.800"/>
          <path class="edge-d" d="M358 256H905V393H358Z"/>
          <path class="axisb" d="M282 410V378"/>
          <path class="axisf" d="M282 373 280 381H284Z"/>
          <path class="axisr" d="M282 410H310"/>
          <path class="axisrf" d="M313 410 305 408V412Z"/>
          <circle class="axisg" cx="282" cy="410" r="2"/>
          <text x="281" y="375" class="axl">Z</text>
          <text x="317" y="410" class="axl">X</text>
          <text x="283" y="407" class="axs">Y</text>
        </svg>
        <div class="legend">
          <div>Contour Plot</div>
          <div>Element Strains (2D &amp; 3D)(vonMises)</div>
          <div>Analysis system</div>
          <div class="lscale">
            <div class="bar"><i class="sg1"></i><i class="sg2"></i><i class="sg3"></i><i class="sg4"></i><i class="sg5"></i><i class="sg6"></i><i class="sg7"></i><i class="sg8"></i><i class="sg9"></i></div>
            <ul class="vals">
              <li>1.184E+00</li><li>1.053E+00</li><li>9.212E-01</li><li>7.896E-01</li><li>6.580E-01</li><li>5.264E-01</li><li>3.948E-01</li><li>2.632E-01</li><li>1.316E-01</li><li>6.323E-05</li>
            </ul>
          </div>
          <div class="nores"><i></i>No result</div>
          <div>Max = 1.184E+00</div>
          <div>3D 92021</div>
          <div>Min = 6.323E-05</div>
          <div>3D 90003</div>
        </div>
        <div class="vinfo"><div>1: 1</div><div>Subcase 1 (loadstep1) : Static Analysis : Frame 4</div></div>
      </div>
    </div>

    <div class="bar1">
      <i class="g"></i>
      <span class="i"><svg><use href="#plot"/></svg></span><i class="car"></i>
      <i class="g"></i>
      <span class="i"><svg><use href="#wheel"/></svg></span>
      <span class="i"><svg><use href="#stack"/></svg></span>
      <div class="sel bycomp"><span>By Comp</span><i class="chev"></i></div>
      <span class="i"><svg><use href="#wire"/></svg></span><i class="car"></i>
      <span class="i"><svg><use href="#sol"/></svg></span><i class="car"></i>
      <span class="i"><svg><use href="#blk"/></svg></span>
      <span class="i"><svg><use href="#mirr"/></svg></span>
      <span class="i"><svg><use href="#grn"/></svg></span>
      <i class="g g4"></i>
      <span class="i p"><svg><use href="#b1"/></svg></span>
      <span class="i p"><svg><use href="#b2"/></svg></span>
      <span class="i p"><svg><use href="#b3"/></svg></span>
      <span class="i p"><svg><use href="#b4"/></svg></span>
      <span class="i p"><svg><use href="#v6"/></svg></span>
      <span class="i p"><svg><use href="#b6"/></svg></span>
      <span class="i p"><svg><use href="#b7"/></svg></span>
      <span class="i p"><svg><use href="#b8"/></svg></span>
      <span class="i p"><svg><use href="#b9"/></svg></span>
      <span class="i p"><svg><use href="#b10"/></svg></span>
      <span class="i p"><svg><use href="#b11"/></svg></span>
      <span class="i p"><svg><use href="#b12"/></svg></span>
      <i class="g"></i>
      <span class="i p"><svg><use href="#b13"/></svg></span>
      <span class="i p"><svg><use href="#b14"/></svg></span>
      <span class="i p"><svg><use href="#b15"/></svg></span>
      <span class="i p"><svg><use href="#b16"/></svg></span>
      <span class="i p"><svg><use href="#b17"/></svg></span>
    </div>
    <div class="bar2">
      <i class="g"></i>
      <span class="i"><svg><use href="#tl"/></svg></span><i class="car"></i>
      <span class="i p"><svg><use href="#first"/></svg></span>
      <span class="i p"><svg><use href="#rw"/></svg></span>
      <span class="i p"><svg><use href="#play"/></svg></span>
      <span class="i p"><svg><use href="#ff"/></svg></span>
      <span class="i p"><svg><use href="#last"/></svg></span>
      <div class="slider">
        <div class="track t1"><i class="thumb"></i></div>
        <div class="track t2"><i class="thumb"></i></div>
      </div>
      <span class="i gearc"><svg><use href="#gear"/></svg></span>
    </div>

    <div class="form">
      <div class="col c1">
        <div class="lblrow"><label>Result type:</label><span class="btn dots3">...</span></div>
        <div class="sel w119 m2"><span>Element Strains (2D &amp; 3D) (t)</span><i class="arr"></i></div>
        <div class="sel w119 m3"><span>vonMises</span><i class="arr"></i></div>
        <div class="layers">
          <label>Layers:</label>
          <div class="sel dis w50"><span></span><i class="arr pale"></i></div>
          <svg class="fun"><use href="#fun"/></svg>
          <i class="car pale"></i>
          <svg class="lay"><use href="#lay"/></svg>
        </div>
        <div class="chk c1chk"><i class="box"></i><span class="off">Use corner data</span></div>
      </div>

      <div class="col c2">
        <label>Selection:</label>
        <div class="rowsel">
          <span class="btn dropb"><i class="tri"></i></span>
          <span class="yellow act">Components</span>
          <span class="btn skip"><i class="skipi"></i></span>
        </div>
        <label class="resolved">Resolved in:</label>
        <div class="sel w105 m1"><span>Analysis System</span><i class="arr"></i></div>
        <div class="rowsys">
          <span class="yellow sys">System</span>
          <span class="btn skip2"><i class="skipi pale"></i></span>
        </div>
        <div class="chk c2chk"><i class="box"></i><span class="off">Use tracking system</span></div>
      </div>

      <div class="col c3">
        <label>Averaging method:</label>
        <div class="sel w89 m2 h14"><span>None</span><i class="arr"></i></div>
        <div class="varrow">
          <i class="box"></i><span class="off vlab">Variation &lt;</span>
          <span class="inp n10">10</span><span class="off pct">[%]</span>
        </div>
        <span class="btn avg off">Averaging Options...</span>
        <label class="env">Envelope trace plot:</label>
        <div class="sel dis w89 m1 h14"><span class="off">None</span><i class="arr pale"></i></div>
      </div>

      <div class="col c4">
        <label>Value filter:</label>
        <div class="sel w43 vf"><span>None</span><i class="arr"></i></div>
        <span class="inp ip1"></span>
        <span class="inp ip2"></span>
        <span class="btn cache">Cache</span>
        <span class="btn apply">Apply</span>
      </div>

      <div class="col c5">
        <div class="rtabs">
          <span class="rt">Display</span><span class="rt">Legend</span><span class="rt on">Result</span>
        </div>
        <div class="rbox">
          <div class="chk ov"><i class="box wh"></i><span>Overlay result display</span></div>
          <span class="btn rb">Clear Contour</span>
          <span class="btn rb">Create Plot Style...</span>
          <span class="btn rb">Show Iso Value</span>
          <span class="btn rb">Projection Rule...</span>
          <span class="btn rb">Query Results...</span>
        </div>
      </div>
    </div>
  </section>
</main>

<footer class="status">Ready</footer>
<div class="taskbar">
  <i class="tk t-a"></i><i class="tk t-b"><b class="dot"></b></i><i class="tk t-c"></i><i class="tk t-d"></i><i class="tk t-e"></i><i class="tk t-f"></i><i class="tk t-g"></i>
</div>
</body>
</html>
```

FILE: styles.css
```css
* { box-sizing: border-box; }
html, body { margin: 0; padding: 0; }
body {
  width: 1000px; height: 606px; overflow: hidden;
  display: flex; flex-direction: column;
  background: #f0f0f0; color: #2a2a2a;
  font: 7.6px/12px "Liberation Sans", Arial, sans-serif;
}
i { display: block; font-style: normal; }
svg { display: block; }
.defs { position: absolute; width: 0; height: 0; }
.svt { font: 4.5px "Liberation Sans", sans-serif; fill: #666; }
.sva { font: bold 5.5px "Liberation Sans", sans-serif; fill: #444; }
.svi { font: italic bold 12px "Liberation Serif", serif; fill: #2838a0; }
.svb { font: bold 6px "Liberation Sans", sans-serif; fill: #444; }

/* title + menu */
.titlebar { height: 16px; flex: none; background: #e9895f; display: flex; align-items: center; padding-left: 0; }
.logo { width: 13px; height: 13px; margin-left: 0; flex: none; }
.title { margin-left: 402px; font: 10.4px/14px "Noto Sans", sans-serif; color: #4a3226; white-space: nowrap; }
.winbtns { margin-left: auto; display: flex; height: 14px; align-self: flex-start; }
.wb { width: 19px; display: flex; align-items: center; justify-content: center; }
.wb .min { width: 6px; height: 2px; background: #4a3226; margin-top: 3px; }
.wb .max { width: 7px; height: 6px; border: 1px solid #4a3226; border-top-width: 2px; }
.wb.close { width: 33px; margin-left: -5px; background: #c75050; color: #fff; font: 10px/14px "Liberation Sans", sans-serif; }
.menubar { height: 16px; flex: none; background: #f5f5f5; display: flex; align-items: center; gap: 9.8px; padding-left: 5px; font: 8.8px/16px "Liberation Sans", sans-serif; color: #333; }

/* toolbars */
.toolbars { height: 44px; flex: none; background: #f0f0f0; padding-top: 0; }
.tb { display: flex; height: 20px; align-items: center; }
.tb2 { margin-top: 1px; }
.i { width: 19px; height: 18px; flex: none; display: flex; justify-content: center; }
.i svg { width: 17px; height: 17px; }
.i.w { width: 19.4px; }
.i.p { width: 19.5px; }
.car { width: 7px; height: 18px; flex: none; position: relative; }
.car::after { content: ""; position: absolute; left: 2px; top: 8px; border: 2px solid transparent; border-top: 2.500px solid #222; border-bottom: 0; }
.car.pale::after { border-top-color: #c4c4c4; }
.car.small { width: 6px; }
.g { width: 10px; height: 18px; flex: none; position: relative; }
.g::after { content: ""; position: absolute; left: 6px; top: 1px; bottom: 1px; width: 1.500px; background: repeating-linear-gradient(#222 0 1.500px, transparent 1.500px 4px); }
.g2 { margin-left: 2px; margin-right: 0; }
.g3 { margin-left: 6px; }
.vs { width: 7px; height: 18px; flex: none; position: relative; }
.vs::after { content: ""; position: absolute; left: 3px; top: 0; bottom: 0; width: 1px; background: #c8c8c8; }

/* main area */
.main { height: 506px; flex: none; display: flex; }
.left { width: 238px; flex: none; display: flex; flex-direction: column; padding-left: 2px; padding-right: 1px; }
.tabs { height: 14px; display: flex; align-items: flex-end; padding-left: 1px; flex: none; }
.tab { height: 12px; width: 39px; padding-left: 2px; line-height: 12px; color: #555; background: #ececec; font-size: 8.300px; }
.tab.on { height: 14px; width: 42px; background: #fff; border: 1px solid #d4d4d4; border-bottom: 0; color: #333; line-height: 13px; padding-left: 2px; }
.x { font-weight: normal; font-size: 9px; margin-left: 2px; }
.lbox { flex: 1; min-height: 0; display: flex; flex-direction: column; border: 1px solid #c2c2c2; }
.ftools { height: 19px; flex: none; display: flex; align-items: center; padding-left: 1px; gap: 2px; }
.fi { width: 17.500px; height: 18px; display: flex; align-items: center; justify-content: center; }
.fi svg { width: 17px; height: 17px; }
.fi.hl { background: #f8c58a; }

.hdr { flex: none; display: flex; align-items: center; background: linear-gradient(#fff, #e6e6e6); border-bottom: 1px solid #bdbdbd; font-size: 8px; color: #333; }
.hc { height: 100%; display: flex; align-items: center; border-right: 1px solid #e0e0e0; flex: none; }
.hc svg { width: 11px; height: 11px; }
.hico { width: 14px; justify-content: center; }
.hid { width: 11px; justify-content: center; }
.hsort { position: relative; padding-left: 2px; background: linear-gradient(#fff, #cfe6f5); }
.hsort::after { content: ""; position: absolute; top: 2px; left: 50%; border: 2px solid transparent; border-bottom: 2px solid #6a8aa8; border-top: 0; }
.hfiles { height: 20px; }
.hs1 { width: 38px; }
.hfiles .hid { margin-left: 2px; }
.hbar { box-shadow: inset 0 -3px 0 -1px #7a9; }
.hent { height: 14px; }
.hs2 { width: 97px; }
.hent .hico:nth-child(2) { width: 14px; margin-left: 0; }
.hname { height: 14px; border-top: 1px solid #bdbdbd; }
.hn { width: 25px; padding-left: 2px; border-right: 1px solid #ccc; }
.hname .hc:last-child { padding-left: 2px; border-right: 0; }

.list { background: #fff; background-image: repeating-linear-gradient(transparent 0 11.400px, #eaf3fa 11.400px 12.400px); flex: none; }
.flist { height: 43px; }
.frow { height: 12px; display: flex; align-items: center; font-size: 8.5px; color: #222; margin-top: 1px; }
.fc { width: 13px; height: 8px; margin-left: 13px; }
.n1 { margin-left: 6px; font-weight: normal; width: 10px; }
.n2 { font-weight: normal; width: 7px; }
.red { width: 8px; height: 8px; background: #e60000; border: 1px solid #222; }
.fb { width: 10px; height: 10px; margin-left: 5px; }
.split { height: 7px; flex: none; background: #ececec; position: relative; }
.split.thin { height: 5px; }
.tri { border: 4px solid transparent; border-top: 4px solid #333; border-bottom: 0; width: 0; height: 0; }
.split .tri { position: absolute; left: 220px; top: 1px; }
.selrow { height: 15px; display: flex; flex: none; align-items: stretch; padding-right: 1px; }
.selrow.low { margin-top: 5px; }
.spin { width: 9px; display: flex; flex-direction: column; justify-content: space-around; align-items: center; }
.up { border: 3px solid transparent; border-bottom: 4px solid #222; border-top: 0; width: 0; height: 0; }
.dn { border: 3px solid transparent; border-top: 4px solid #222; border-bottom: 0; width: 0; height: 0; }
.combo { flex: 1; background: #fff; border: 1px solid #d8d8d8; padding-left: 1px; line-height: 13px; position: relative; color: #444; }
.combo::after { content: ""; position: absolute; right: 2px; top: 3px; width: 4px; height: 4px; border: solid #555; border-width: 0 1px 1px 0; transform: rotate(45deg); }
.etools { height: 25px; flex: none; display: flex; align-items: center; padding-left: 1px; }
.ei { width: 19px; height: 18px; display: flex; justify-content: center; }
.ei svg { width: 16px; height: 16px; }
.dots { width: 1px; height: 15px; margin: 0 8px 0 47px; background: repeating-linear-gradient(#aaa 0 1px, transparent 1px 3px); }
.e3 { margin-left: 3px; }
.e4 { margin-left: 3px; }
.hent .hid { width: 11px; }
.tree { height: 210px; padding-top: 1px; }
.node { height: 12.400px; display: flex; align-items: center; font-size: 7.8px; color: #444; padding-left: 3px; position: relative; }
.exp { width: 7px; height: 7px; border: 1px solid #a8a8c0; background: #f6f6fa; position: relative; flex: none; }
.exp::before { content: ""; position: absolute; left: 1px; right: 1px; top: 2px; height: 1px; background: #446; }
.exp::after { content: ""; position: absolute; top: 1px; bottom: 1px; left: 2px; width: 1px; background: #446; }
.node svg { width: 13px; height: 12px; margin-left: 3px; flex: none; }
.node span { margin-left: 4px; white-space: nowrap; }
.node .first { margin-left: 6px; }
.plist { flex: 1; }

.right { flex: 1; min-width: 0; border-left: 2px solid #c8c8c8; margin-left: 0; display: flex; flex-direction: column; }
.ptitle { height: 15px; flex: none; display: flex; justify-content: space-between; padding: 1px 8px 0 319px; font: bold 11px/16px "Liberation Sans", sans-serif; color: #111; }
.vrow { height: 329px; flex: none; display: flex; }
.vtool { width: 32px; flex: none; display: flex; flex-direction: column; align-items: center; padding-left: 3px; gap: 1.500px; }
.hd { width: 16px; height: 6px; flex: none; background: radial-gradient(circle, #222 .7px, transparent .9px) 0 50%/4.500px 4px repeat-x; }
.hd2 { margin-top: 1px; margin-bottom: 1px; }
.vi { height: 18px; width: 18px; flex: none; display: flex; justify-content: center; }
.vi svg { width: 17px; height: 17px; }
.vc { position: relative; left: 2px; }
.vc svg { width: 14px; height: 14px; margin-top: 2px; }
.ve { margin-top: -1px; }
.vp { width: 722px; height: 329px; flex: none; position: relative; border: 1px solid #2cd3e0; background: linear-gradient(#2f5580, #47688a 28%, #6c8094 52%, #8b9299 74%, #a0a0a0); overflow: hidden; }
.model { position: absolute; inset: 0; width: 100%; height: 100%; }
.base { fill: #0000c9; }
.dk path { fill: #00009e; }
.blk { fill: #000040; }
.lt path { fill: #1a85ff; }
.lt path.md { fill: #1668d8; }
.edges path, .edges { fill: none; stroke: #000060; stroke-width: .7; }
.lt-e path { stroke: #0c48a8; stroke-width: .6; }
.top { fill: none; stroke: #05051f; stroke-width: 2; }
.crack { stroke: #000; stroke-width: 1; }
.hot { fill: #20e060; }
.edge-d { fill: none; stroke: #1c2a66; stroke-width: .8; }
.ghost { font: 8px "Liberation Sans", sans-serif; fill: #0c0cd4; }
.ghostbox { fill: #fff; opacity: .03; }
.axisb { stroke: #2040e0; stroke-width: 1.200; }
.axisf { fill: #2040e0; }
.axisr { stroke: #e02828; stroke-width: 1; }
.axisrf { fill: #e02828; }
.axisg { fill: #30e030; }
.axl { font: 8.500px "Liberation Sans", sans-serif; fill: #e8e8e8; }
.axs { font: 6px "Liberation Sans", sans-serif; fill: #e8e8e8; }
.legend { position: absolute; left: 3px; top: 2px; color: #e2e6ec; font: 9px/11px "Liberation Sans", sans-serif; white-space: nowrap; }
.lscale { display: flex; margin-top: 1px; height: 137px; position: relative; }
.bar { width: 8px; margin: 5.500px 0 0 1px; height: 125px; display: flex; flex-direction: column; }
.bar i { flex: 1; }
.sg1 { background: #ff0000; } .sg2 { background: #ff7a00; } .sg3 { background: #ffe000; }
.sg4 { background: #a8f000; } .sg5 { background: #38f000; } .sg6 { background: #28f8a0; }
.sg7 { background: #00c4e0; } .sg8 { background: #1a7cff; } .sg9 { background: #0000c0; }
.vals { list-style: none; margin: 0; padding: 0 0 0 7px; position: relative; left: -8px; }
.vals li { height: 13.880px; line-height: 11px; padding-left: 7px; position: relative; color: #e6eaee; }
.vals li::before { content: ""; position: absolute; left: 0; top: 5.500px; width: 14px; height: 1px; background: #e4e4e4; margin-left: -7px; }
.nores { display: flex; align-items: center; gap: 8px; color: #a8aeb4; margin-top: 0; }
.nores i { width: 8px; height: 8px; margin-left: 1px; background: #c8c8c8; }
.vinfo { position: absolute; right: 5px; top: 4px; text-align: right; color: #dfe4ea; font: 9.200px/13px "Liberation Sans", sans-serif; }

.bar1 { height: 22px; flex: none; display: flex; align-items: center; padding-top: 1px; }
.bar2 { height: 22px; flex: none; display: flex; align-items: center; padding-top: 1px; }
.g4 { margin-left: 0; }
.bycomp { width: 49px; height: 15px; flex: none; border: 1px solid #aaa; padding-left: 2px; align-items: center; }
.chev { width: 4px; height: 4px; border: solid #333; border-width: 0 1px 1px 0; transform: rotate(45deg); margin: -2px 2px 0 auto; }
.slider { width: 109px; flex: none; margin-left: .500px; display: flex; flex-direction: column; gap: 2px; }
.track { position: relative; background: linear-gradient(#c0c0c0, #cfcfcf); }
.t1 { height: 7px; }
.t2 { height: 3px; }
.thumb { position: absolute; left: 97px; top: 0; bottom: 0; width: 12px; background: #ececec; border: 1px solid #999; border-top-color: #fff; border-left-color: #fff; }
.gearc { margin-left: 9.500px; }
.gearc svg, .bar2 .i svg { width: 16px; height: 16px; }

/* bottom form */
.form { flex: 1; min-height: 0; display: flex; position: relative; }
.form::before { content: ""; position: absolute; left: 0; right: 6px; top: 4px; height: 1px; background: #9c9c9c; }
.form::after { content: ""; position: absolute; left: 0; right: 6px; bottom: 0; height: 1px; background: #9c9c9c; }
.col { padding-top: 9px; flex: none; display: flex; flex-direction: column; align-items: flex-start; }
label { display: block; line-height: 12px; white-space: nowrap; }
.sel { display: flex; background: #fff; border: 1px solid; border-color: #666 #e4e4e4 #e4e4e4 #666; height: 15px; align-items: center; padding-left: 1px; line-height: 12px; white-space: nowrap; flex: none; }
.sel span { flex: 1; overflow: hidden; }
.arr { width: 10px; height: 100%; flex: none; background: #f0f0f0; position: relative; }
.arr::after { content: ""; position: absolute; left: 2px; top: 4px; border: 3px solid transparent; border-top: 3.500px solid #111; border-bottom: 0; }
.arr.pale::after { border-top-color: #999; }
.dis { background: #f0f0f0; }
.off { color: #a4a4a4; }
.btn { display: flex; align-items: center; justify-content: center; background: #f0f0f0; border: 1px solid; border-color: #fff #6a6a6a #6a6a6a #fff; line-height: 11px; white-space: nowrap; flex: none; }
.m1 { margin-top: 1px; } .m2 { margin-top: 2px; } .m3 { margin-top: 3px; }
.h14 { height: 14px; }
.w119 { width: 119px; margin-left: 4px; } .w105 { width: 105px; margin-left: 6px; } .w89 { width: 89px; margin-left: 5px; } .w50 { width: 50px; } .w43 { width: 43px; }
.box { width: 8px; height: 8px; border: 1px solid; border-color: #888 #ddd #ddd #888; background: #f0f0f0; flex: none; }
.box.wh { background: #fff; }
.chk { display: flex; align-items: center; gap: 4px; white-space: nowrap; height: 9px; }
.c1 { width: 149px; padding-left: 4px; padding-right: 7px; }
.lblrow { display: flex; justify-content: space-between; width: 100%; }
.dots3 { width: 11px; height: 10px; margin-top: 1px; line-height: 6px; align-items: flex-end; }
.layers { display: flex; align-items: center; margin: 4px 0 0 5px; height: 14px; }
.layers label { width: 34px; }
.layers .dis { height: 14px; }
.fun { width: 15px; height: 14px; margin-left: 4px; }
.layers .car { width: 9px; }
.lay { width: 14px; height: 14px; margin-left: 4px; }
.c1chk { margin: 10px 0 0 5px; }
.c2 { width: 120px; }
.rowsel { display: flex; margin: 1px 0 0 4px; height: 15px; gap: 2px; }
.dropb { width: 15px; }
.yellow { display: flex; align-items: center; justify-content: center; background: #e5e55a; }
.act { width: 75px; border: 1px solid #16c6d0; color: #332; }
.skip { width: 14px; }
.skipi { width: 5px; height: 6px; background: #111; clip-path: polygon(0 0, 20% 0, 20% 45%, 100% 0, 100% 100%, 20% 55%, 20% 100%, 0 100%); }
.skipi.pale { background: #888; }
.resolved { margin-top: 7px; }
.rowsys { display: flex; margin: 5px 0 0 6px; height: 15px; }
.sys { width: 91px; color: #9a9a60; }
.skip2 { width: 15px; }
.c2chk { margin: 4px 0 0 7px; }
.c3 { width: 101px; }
.varrow { display: flex; align-items: center; height: 15px; margin: 4px 0 0 4px; }
.vlab { margin-left: 5px; width: 39px; }
.inp { display: flex; align-items: center; justify-content: flex-end; padding-right: 3px; border: 1px solid; border-color: #888 #e8e8e8 #e8e8e8 #888; flex: none; }
.n10 { width: 20px; height: 15px; color: #888; font-size: 8.500px; }
.pct { margin-left: 6px; color: #666; }
.avg { width: 77px; height: 15px; margin: 5px 0 0 17px; }
.env { margin-top: 3px; }
.c4 { width: 61px; }
.vf { height: 14px; margin: 3px 0 0 2px; }
.ip1 { width: 38px; height: 14px; margin: 4px 0 0 2px; }
.ip2 { width: 38px; height: 15px; margin: 2px 0 0 2px; }
.cache { width: 53px; height: 15px; margin: 8px 0 0 2px; font-size: 8.200px; }
.apply { width: 52px; height: 15px; margin: 1px 0 0 3px; border: 1px dotted #222; font-size: 8.200px; }
.c5 { width: 125px; margin-top: 6px; height: 104px; padding-top: 0; border-left: 1px solid #bbb; padding-left: 4px; }
.rtabs { display: flex; align-items: flex-end; margin-left: 2px; height: 15px; }
.rt { width: 29px; height: 11px; text-align: center; line-height: 11px; background: #ececec; border: 1px solid #d8d8d8; border-bottom: 0; color: #333; }
.rt.on { height: 15px; background: #fff; line-height: 13px; }
.rbox { width: 112px; height: 90px; border: 2px solid #d8d8d8; display: flex; flex-direction: column; padding-left: 3px; gap: 2px; }
.ov { margin: 3px 0 3px 3px; height: 9px; }
.rb { width: 76px; height: 12px; border-color: #fff #555 #555 #fff; }

/* status + taskbar */
.status { height: 18px; flex: none; padding: 3px 0 0 3px; font-size: 8px; line-height: 14px; color: #333; }
.taskbar { height: 6px; flex: none; display: flex; background: linear-gradient(90deg, #c2562c, #b8472b 60%, #b03a2a); overflow: hidden; }
.tk { height: 100%; flex: none; }
.t-a { width: 69px; background: linear-gradient(90deg, #fff 8%, #c2562c 8%, #c2562c 40%, #d88a3a 46%, #d8b050 56%, #c2562c 58%); }
.t-b { width: 34px; background: #cc7050; position: relative; }
.dot { position: absolute; left: 11px; top: 2px; width: 12px; height: 10px; border-radius: 50%; background: #d83030; }
.t-c { width: 47px; background: linear-gradient(90deg, #c2562c 25%, #e4c070 25%, #e4c070 55%, #c2562c 55%); }
.t-d { width: 37px; background: linear-gradient(90deg, #8a5a50 60%, #c2562c 60%); }
.t-e { width: 20px; background: #108020; }
.t-f { width: 36px; margin-left: 10px; background: #cc6a44; }
.t-g { width: 34px; background: #d88868; }
```
